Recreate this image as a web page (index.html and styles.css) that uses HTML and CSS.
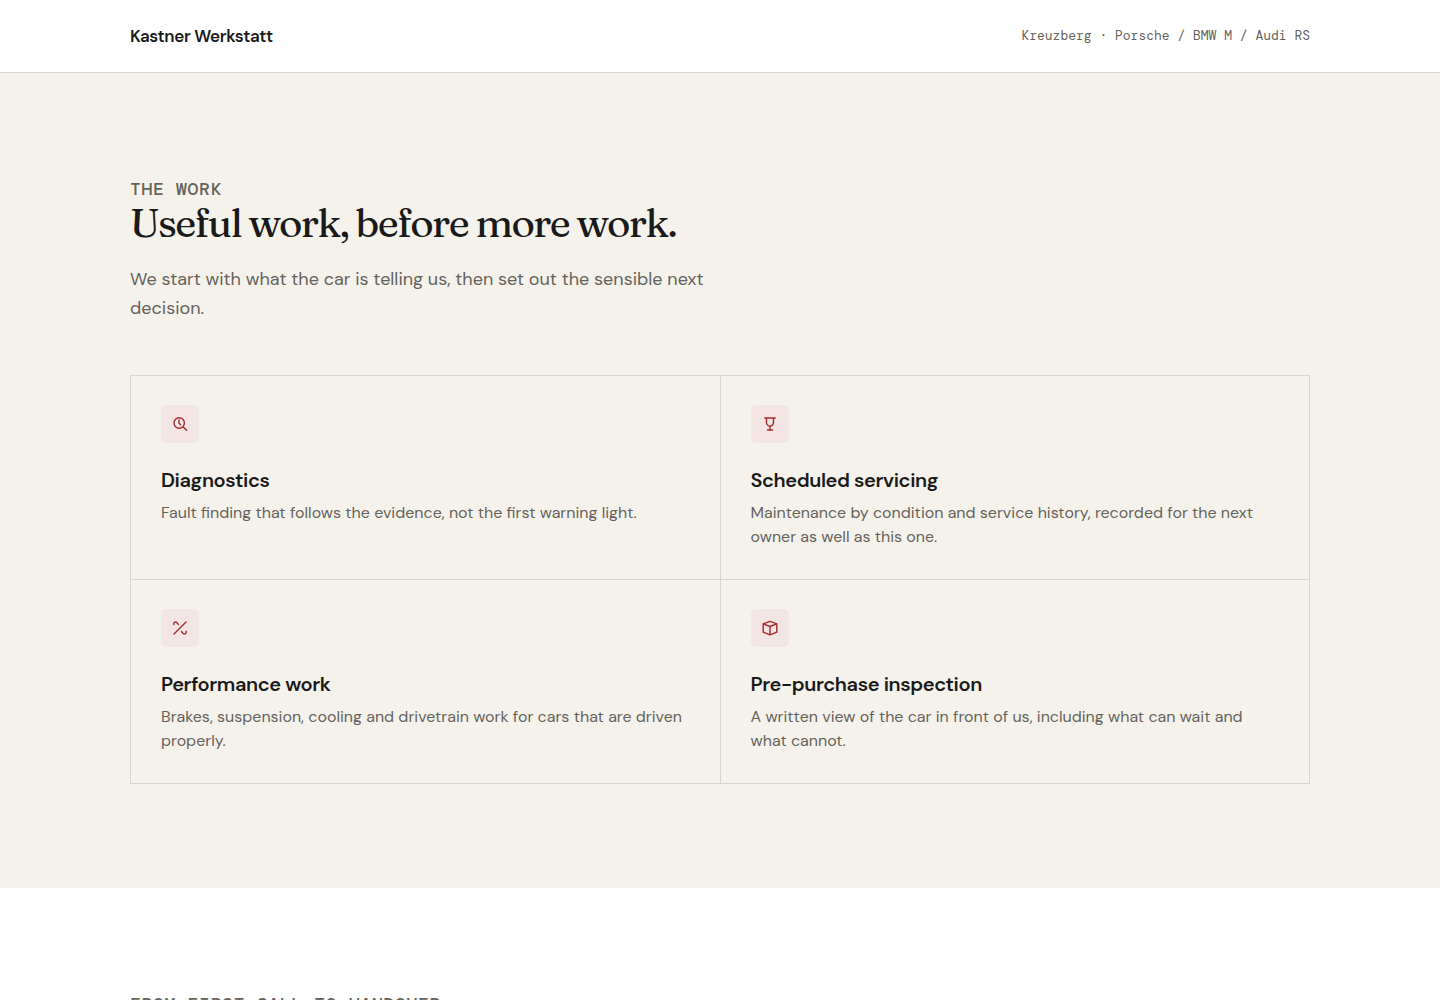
FILE: index.html
```html
<!DOCTYPE html>
<html lang="en">
<head>
  <meta charset="UTF-8">
  <meta name="viewport" content="width=device-width, initial-scale=1.0">
  <title>Kastner Werkstatt</title>
  <link rel="stylesheet" href="styles.css">
</head>
<body>

  <header class="site_header">
    <div class="wrap header_inner">
      <strong class="brand">Kastner Werkstatt</strong>
      <span class="header_note">Kreuzberg · Porsche / BMW M / Audi RS</span>
    </div>
  </header>

  <main>

    <section class="section work">
      <div class="wrap">
        <div class="section_head">
          <p class="eyebrow">The work</p>
          <h2>Useful work, before more work.</h2>
          <p class="lead">We start with what the car is telling us, then set out the sensible next decision.</p>
        </div>

        <div class="service_grid">
          <article class="service">
            <span class="service_icon">
              <svg viewBox="0 0 18 18" aria-hidden="true">
                <circle cx="8.2" cy="8" r="5.2"/>
                <path d="M12 11.8 15.7 15.3M8 5v3l1.5 1.7"/>
              </svg>
            </span>
            <h3>Diagnostics</h3>
            <p>Fault finding that follows the evidence, not the first warning light.</p>
          </article>

          <article class="service">
            <span class="service_icon">
              <svg viewBox="0 0 18 18" aria-hidden="true">
                <path d="M3.8 3h10.4M5.5 3v4.6a3.5 3.5 0 0 0 7 0V3M9 11.3v3.6M6.5 15h5"/>
              </svg>
            </span>
            <h3>Scheduled servicing</h3>
            <p>Maintenance by condition and service history, recorded for the next owner as well as this one.</p>
          </article>

          <article class="service">
            <span class="service_icon">
              <svg viewBox="0 0 18 18" aria-hidden="true">
                <path d="M3 15 15 3M2.8 5.6V4.2c0-1.3 2.3-1.5 3.1-.5L7.6 5.6M10.4 12.6l1.8 1.8c1 1 3 .6 3-.8v-1.4"/>
              </svg>
            </span>
            <h3>Performance work</h3>
            <p>Brakes, suspension, cooling and drivetrain work for cars that are driven properly.</p>
          </article>

          <article class="service">
            <span class="service_icon">
              <svg viewBox="0 0 18 18" aria-hidden="true">
                <path d="M9 2.3 15.8 4.8v8.4L9 15.8l-6.8-2.6V4.8zM2.2 4.8 9 7.5l6.8-2.7M9 7.5v8.3"/>
              </svg>
            </span>
            <h3>Pre-purchase inspection</h3>
            <p>A written view of the car in front of us, including what can wait and what cannot.</p>
          </article>
        </div>
      </div>
    </section>

    <section class="section process">
      <div class="wrap">
        <p class="eyebrow">From first call to handover</p>
      </div>
    </section>

  </main>

</body>
</html>
```

FILE: styles.css
```css
:root{
  --ink:#1a1a1a;
  --muted:#65635c;
  --paper:#f5f2eb;
  --line:#d8d5cc;
  --accent:#a32a2e;
  --sans:"DM Sans", Inter, "Liberation Sans", sans-serif;
  --serif:Fraunces, "Liberation Serif", serif;
  --mono:"DM Mono", "Liberation Mono", monospace;
}

*{
  box-sizing:border-box;
}

body,h2,h3,p{
  margin:0;
}

body{
  background:#fff; color:var(--ink);
  font-family:var(--sans); font-size:16px; line-height:24px;
}

.wrap{
  width:calc(100% - 48px); max-width:1180px; margin:0 auto;
}

/* header */

.site_header{
  border-bottom:1px solid var(--line);
}

.header_inner{
  min-height:72px; display:flex; align-items:center; justify-content:space-between; gap:24px;
}

.brand{
  font-size:17px; font-weight:600; letter-spacing:-.02em;
}

.header_note{
  color:var(--muted); font-family:var(--mono); font-size:13px;
}

/* sections */

.section{
  padding:104px 0;
}

.work{
  background:var(--paper);
}

.section_head{
  max-width:620px; margin-bottom:52px;
}

.eyebrow{
  color:var(--muted); font-family:var(--mono); font-size:18px; font-weight:600;
  letter-spacing:.04em; text-transform:uppercase;
}

h2{
  font-family:var(--serif); font-size:40px; font-weight:500; line-height:44px; letter-spacing:-.04em;
}

.lead{
  margin-top:20px; color:var(--muted); font-size:18px; line-height:29px;
}

/* services */

.service_grid{
  display:grid; grid-template-columns:repeat(2, 1fr); gap:1px;
  background:var(--line); border:1px solid var(--line);
}

.service{
  padding:29px 30px 30px; background:var(--paper);
}

.service_icon{
  width:38px; height:38px; margin-bottom:24px; display:grid; place-items:center;
  border-radius:5px; background:#f3e5e3; color:var(--accent);
}

.service_icon svg{
  width:18px; height:18px; fill:none; stroke:currentColor; stroke-width:1.4;
  stroke-linecap:round; stroke-linejoin:round;
}

.service h3{
  margin-bottom:8px; font-size:20px; font-weight:600; line-height:26px; letter-spacing:-.02em;
}

.service p{
  color:var(--muted);
}

@media (max-width:700px){
  .service_grid{
    grid-template-columns:1fr;
  }
}
```
